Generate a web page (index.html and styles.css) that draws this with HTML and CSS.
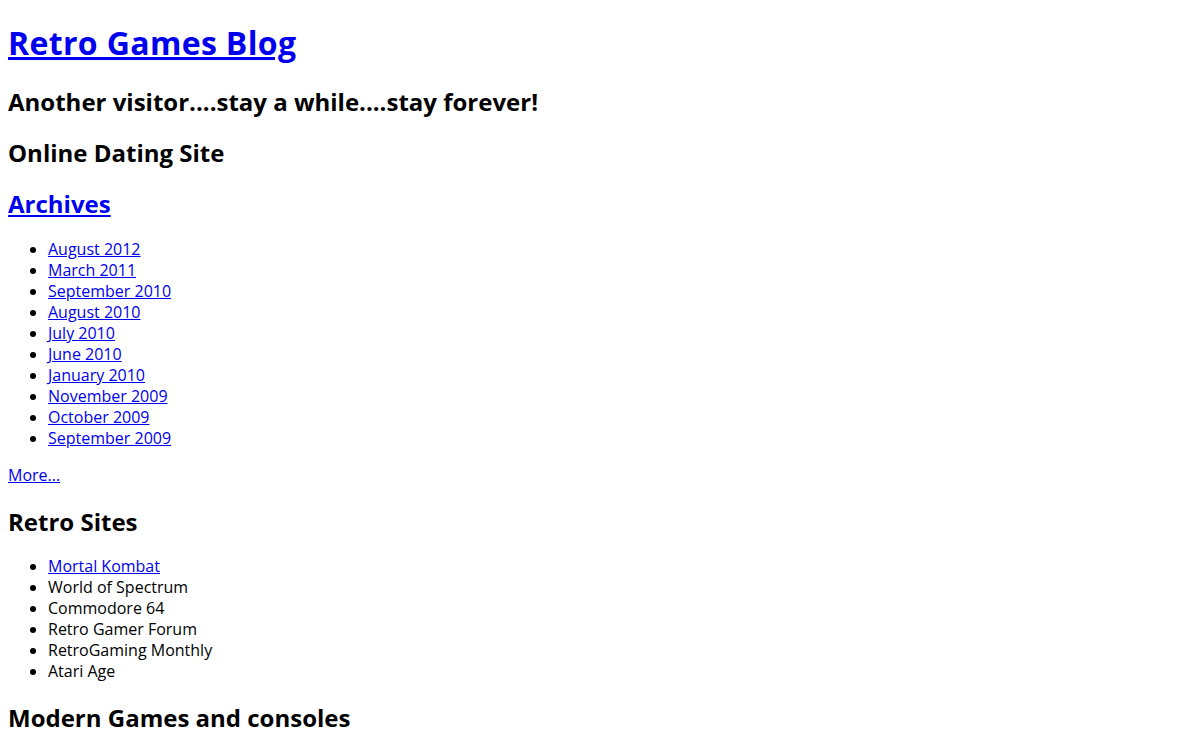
FILE: index.html
```html
<!DOCTYPE html>
<html lang="en">
<head>
<meta charset="utf-8">
<title>Retro Games Blog</title>
<link rel="stylesheet" href="styles.css">
</head>
<body class="page">
<header class="masthead">
  <h1 class="site-title"><a href="#">Retro Games Blog</a></h1>
  <h2 class="tagline">Another visitor....stay a while....stay forever!</h2>
</header>
<aside class="sidebar">
  <section class="widget">
    <h2 class="widget-title">Online Dating Site</h2>
  </section>
  <section class="widget">
    <h2 class="widget-title"><a href="#">Archives</a></h2>
    <ul class="widget-list">
      <li><a href="#">August 2012</a></li>
      <li><a href="#">March 2011</a></li>
      <li><a href="#">September 2010</a></li>
      <li><a href="#">August 2010</a></li>
      <li><a href="#">July 2010</a></li>
      <li><a href="#">June 2010</a></li>
      <li><a href="#">January 2010</a></li>
      <li><a href="#">November 2009</a></li>
      <li><a href="#">October 2009</a></li>
      <li><a href="#">September 2009</a></li>
    </ul>
    <p class="more"><a href="#">More...</a></p>
  </section>
  <section class="widget">
    <h2 class="widget-title">Retro Sites</h2>
    <ul class="widget-list">
      <li><a href="#">Mortal Kombat</a></li>
      <li>World of Spectrum</li>
      <li>Commodore 64</li>
      <li>Retro Gamer Forum</li>
      <li>RetroGaming Monthly</li>
      <li>Atari Age</li>
    </ul>
  </section>
  <section class="widget">
    <h2 class="widget-title">Modern Games and consoles</h2>
  </section>
</aside>
</body>
</html>
```
FILE: styles.css
```css
.page {
  margin: 0 8px 8px;
  font-family: "Open Sans", "Liberation Sans", sans-serif;
  font-size: 16px;
  line-height: 21px;
  color: #000;
  background: #fff;
}
a {
  color: #0000ee;
}
.site-title {
  font-size: 32px;
  line-height: 43px;
  margin: 21.44px 0;
  font-weight: bold;
  letter-spacing: 0.35px;
}
.tagline,
.widget-title {
  font-size: 24px;
  line-height: 31px;
  margin: 19.92px 0;
  font-weight: bold;
}
.widget-list {
  margin: 16px 0;
  padding-left: 40px;
}
.more {
  margin: 16px 0;
}
```
